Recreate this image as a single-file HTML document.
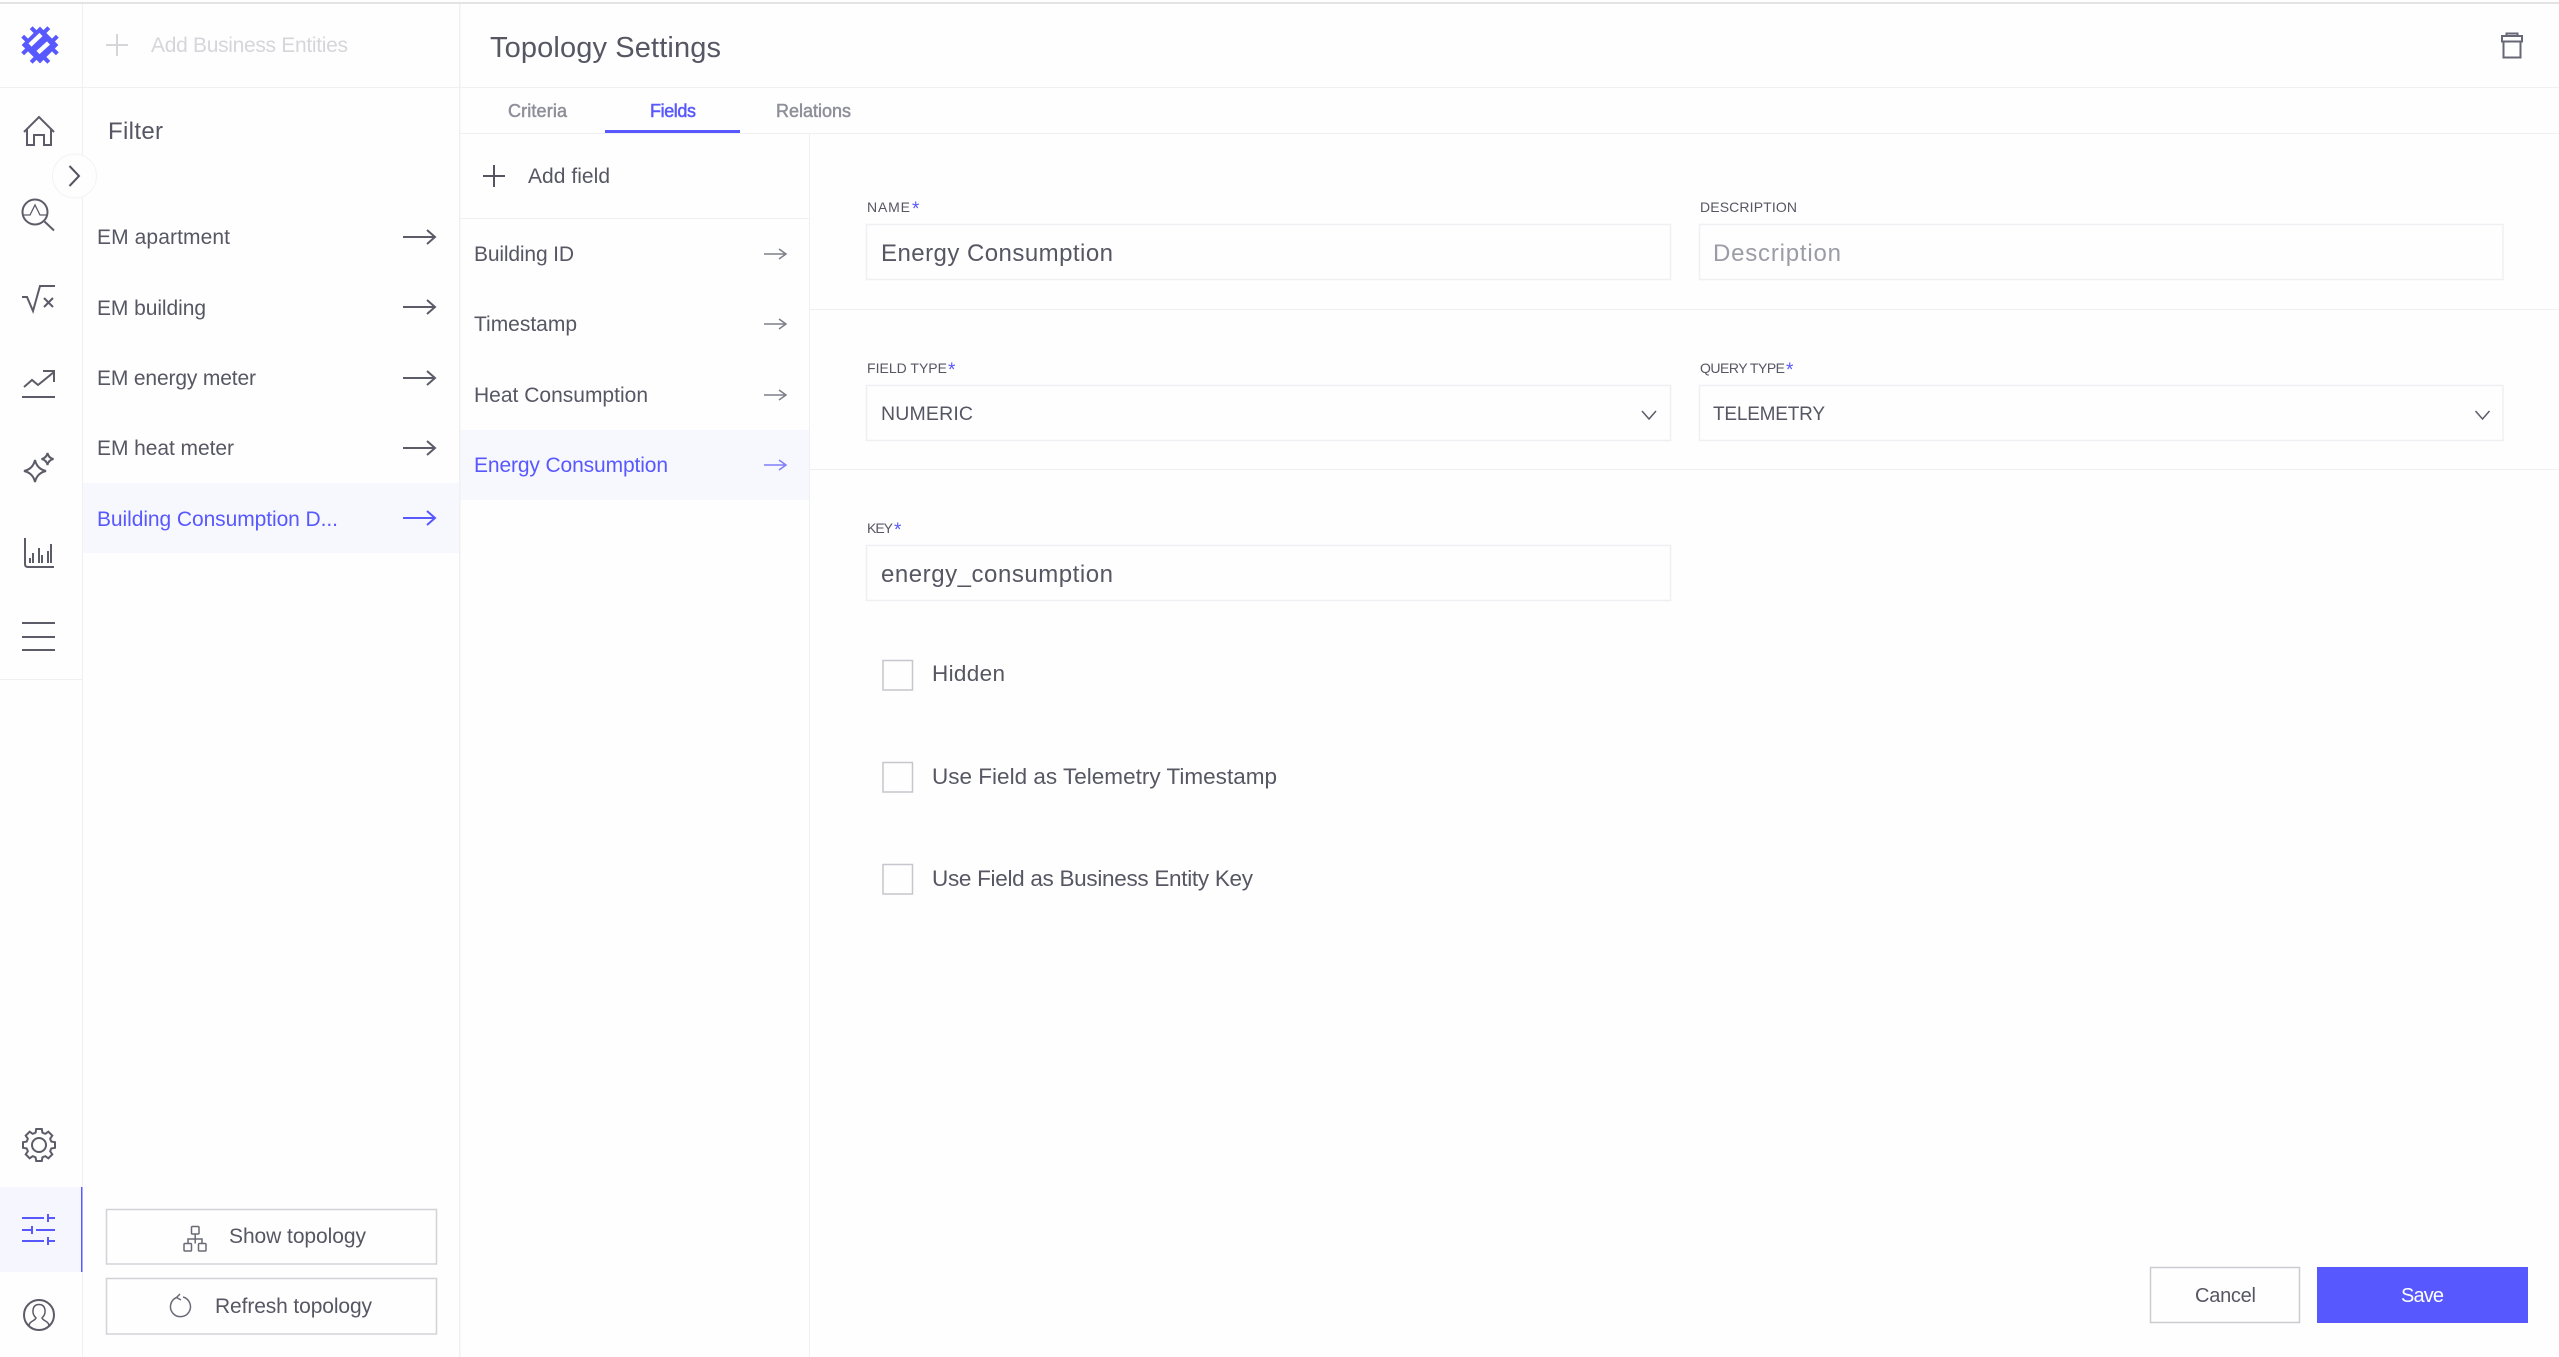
<!DOCTYPE html>
<html lang="en">
<head>
<meta charset="utf-8">
<title>Topology Settings</title>
<style>
html,body{margin:0;padding:0;background:#fefefe;width:2559px;height:1357px;overflow:hidden}
svg{display:block}
text{font-family:"Liberation Sans",Arial,sans-serif;fill:#575764;font-size:21px}
.ic{fill:none;stroke:#5c5c69;stroke-width:2}
.lb{font-size:14px}
.st{font-size:19px;fill:#5858ff}
.b{fill:#5858ff}
</style>
</head>
<body>
<svg xmlns="http://www.w3.org/2000/svg" width="2559" height="1357" viewBox="0 0 2559 1357">
<defs>
<path id="tooth" d="M-4.9-11.6-3.4-12.4-2.8-16H2.8L3.4-12.4 4.9-11.6"/>
<path id="arr" d="M403 0H435M427-7 435 0 427 7"/>
<path id="arr2" d="M764 0H786M779-5 786 0 779 5"/>
</defs>

<rect width="2559" height="1357" fill="#fefefe"/>
<rect y="2" width="2559" height="2" fill="#e3e3e3"/>

<!-- highlights -->
<rect x="83" y="483" width="376" height="70" fill="#f7f7fe"/>
<rect x="460" y="430" width="349" height="70" fill="#f7f7fe"/>
<rect y="1187" width="82" height="85" fill="#f6f6fe"/>
<rect x="81" y="1187" width="1.5" height="85" fill="#5858ff"/>

<!-- grid lines -->
<g fill="#f0f0f3">
<rect x="82" y="4" width="1" height="1183"/><rect x="82" y="1272" width="1" height="85"/>
<rect x="459" y="4" width="1.5" height="1353"/>
<rect y="87" width="2559" height="1"/>
<rect x="460" y="133" width="2099" height="1"/>
<rect x="809" y="134" width="1" height="1223"/>
<rect x="460" y="218" width="349" height="1"/>
<rect x="810" y="309" width="1749" height="1"/>
<rect x="810" y="469" width="1749" height="1"/>
<rect y="679" width="82" height="1"/>
</g>

<!-- logo -->
<g transform="translate(40 45) rotate(45)" fill="#5858ff">
<rect x="-13" y="-13" width="26" height="26"/>
<rect x="-18.500" y="-8" width="37" height="4"/><rect x="-18.500" y="4" width="37" height="4"/>
<rect x="-8" y="-18.500" width="4" height="37"/><rect x="4" y="-18.500" width="4" height="37"/>
</g>
<path d="M30 45 41 34.500M38 52.500 48.500 43" stroke="#fefefe" stroke-width="4.500" fill="none"/>

<!-- rail icons -->
<g class="ic">
<path d="M24 132 39 117 54 132M27 129V145H34V135H44V145H51V129"/>
<circle cx="35" cy="212" r="12.500"/><path d="M44.500 221.500 54 230.500"/>
<path d="M23 215H30L35 205 40 215H47" stroke-width="1.300"/>
<path d="M22 297H27L33 311 40 286H55M44 298 53 307M53 298 44 307"/>
<path d="M24 387 32 380 38 385 54 372M43 371H54V382M22 397H55"/>
<path d="M35 460Q37 469 46 471 37 473 35 482 33 473 24 471 33 469 35 460Z"/>
<path d="M47.500 453Q48.500 458 53.500 459 48.500 460 47.500 465 46.500 460 41.500 459 46.500 458 47.500 453Z"/>
<path d="M25 538V564Q25 567 28 567H54"/>
<path d="M22 623H55M22 637H55M22 650H55"/>
<circle cx="39" cy="1145" r="7"/>
<g transform="translate(39 1145)">
<use href="#tooth"/><use href="#tooth" transform="rotate(45)"/><use href="#tooth" transform="rotate(90)"/><use href="#tooth" transform="rotate(135)"/><use href="#tooth" transform="rotate(180)"/><use href="#tooth" transform="rotate(225)"/><use href="#tooth" transform="rotate(270)"/><use href="#tooth" transform="rotate(315)"/>
</g>
<circle cx="39" cy="1315" r="15"/>
<path d="M29 1326C29 1321 35 1321 36 1318 34 1316 32.500 1313 33 1310 33.500 1306 36 1304.500 39 1304.500S44.500 1306 45 1310C45.500 1313 44 1316 42 1318 43 1321 49 1321 49 1326" stroke-width="1.500"/>
</g>
<g fill="#5c5c69">
<rect x="29" y="558" width="2" height="5"/><rect x="32" y="553" width="2" height="10"/><rect x="38" y="548" width="2" height="15"/><rect x="41" y="555" width="2" height="8"/><rect x="47" y="551" width="2" height="12"/><rect x="50" y="544" width="2" height="19"/>
</g>
<path d="M22 1218H44M48 1214V1222M48 1218H55M22 1230H31M32 1226V1234M36 1230H55M22 1241H44M48 1237V1245M48 1241H55" fill="none" stroke="#5858ff" stroke-width="2"/>

<!-- toggle -->
<circle cx="74.500" cy="176" r="22" fill="#fefefe" stroke="#f3f3f5"/>
<path d="M69.500 166 79 176 69.500 186" fill="none" stroke="#555562" stroke-width="2"/>

<!-- left panel -->
<path d="M117 34V56M106 45H128" stroke="#d6d5da" stroke-width="2" fill="none"/>
<text x="151" y="52" textLength="197" style="fill:#d6d5da">Add Business Entities</text>
<text x="108" y="139" textLength="55" style="font-size:24px">Filter</text>
<text x="97" y="244" textLength="133">EM apartment</text>
<text x="97" y="315" textLength="109">EM building</text>
<text x="97" y="385" textLength="159">EM energy meter</text>
<text x="97" y="455" textLength="137">EM heat meter</text>
<text x="97" y="526" textLength="241" class="b">Building Consumption D...</text>
<g fill="none" stroke-width="2">
<use href="#arr" y="237" stroke="#5c5c69"/><use href="#arr" y="307" stroke="#5c5c69"/><use href="#arr" y="378" stroke="#5c5c69"/><use href="#arr" y="448" stroke="#5c5c69"/><use href="#arr" y="518" stroke="#5858ff"/>
</g>

<!-- left buttons -->
<rect x="106.500" y="1209.500" width="330" height="54.500" fill="#fefefe" stroke="#d2d2d8" stroke-width="1.500"/>
<rect x="106.500" y="1278.500" width="330" height="55.500" fill="#fefefe" stroke="#d2d2d8" stroke-width="1.500"/>
<text x="229" y="1243" textLength="137">Show topology</text>
<text x="215" y="1313" textLength="157">Refresh topology</text>
<g fill="none" stroke="#6a6a76" stroke-width="1.500">
<rect x="191.500" y="1226.500" width="7.500" height="7.500" rx="1"/>
<rect x="184" y="1243.500" width="7.500" height="7.500" rx="1"/>
<rect x="198.500" y="1243.500" width="7.500" height="7.500" rx="1"/>
<path d="M195.200 1234V1243.500M188 1243.500V1239H202V1243.500"/>
<path d="M176.500 1297.500A10 10 0 1 0 183 1297M180 1294 176.500 1297.500 181 1300"/>
</g>

<!-- header -->
<text x="490" y="57" textLength="231" style="font-size:29px">Topology Settings</text>
<g fill="none" stroke="#676775" stroke-width="2">
<path d="M2503.500 42V57.500H2520.500V42M2502 36H2522V41.500H2502ZM2506.500 36V33.500H2517.500V36"/>
</g>

<!-- tabs -->
<text x="508" y="117" textLength="59" style="font-size:18px;fill:#8f8f9a;stroke:#8f8f9a;stroke-width:.5">Criteria</text>
<text x="650" y="117" textLength="46" style="font-size:18px;fill:#5858ff;stroke:#5858ff;stroke-width:.5">Fields</text>
<text x="776" y="117" textLength="75" style="font-size:18px;fill:#8f8f9a;stroke:#8f8f9a;stroke-width:.5">Relations</text>
<rect x="605" y="130" width="135" height="3" fill="#5858ff"/>

<!-- field list -->
<path d="M494 165V187M483 176H505" stroke="#555562" stroke-width="2" fill="none"/>
<text x="528" y="183" textLength="82">Add field</text>
<text x="474" y="261" textLength="100">Building ID</text>
<text x="474" y="331" textLength="103">Timestamp</text>
<text x="474" y="402" textLength="174">Heat Consumption</text>
<text x="474" y="472" textLength="194" class="b">Energy Consumption</text>
<g fill="none" stroke-width="1.500">
<use href="#arr2" y="254" stroke="#7f7f8a"/><use href="#arr2" y="324" stroke="#7f7f8a"/><use href="#arr2" y="395" stroke="#7f7f8a"/><use href="#arr2" y="465" stroke="#7f7ffb"/>
</g>

<!-- form: labels -->
<text x="867" y="212" textLength="43" class="lb">NAME</text><text x="912" y="215" class="st">*</text>
<text x="1700" y="212" textLength="97" class="lb">DESCRIPTION</text>
<text x="867" y="373" textLength="80" class="lb">FIELD TYPE</text><text x="948" y="376" class="st">*</text>
<text x="1700" y="373" textLength="85" class="lb">QUERY TYPE</text><text x="1786" y="376" class="st">*</text>
<text x="867" y="533" textLength="26" class="lb">KEY</text><text x="894" y="536" class="st">*</text>

<!-- form: inputs -->
<g fill="#fefefe" stroke="#f0f0f3" stroke-width="1.500">
<rect x="866.500" y="224.500" width="804" height="55"/>
<rect x="1699.500" y="224.500" width="803.500" height="55"/>
<rect x="866.500" y="385.500" width="804" height="55"/>
<rect x="1699.500" y="385.500" width="803.500" height="55"/>
<rect x="866.500" y="545.500" width="804" height="55"/>
</g>
<text x="881" y="261" textLength="232" style="font-size:24px">Energy Consumption</text>
<text x="1713" y="261" textLength="128" style="font-size:24px;fill:#9c9ca6">Description</text>
<text x="881" y="420" textLength="92" style="font-size:19.500px">NUMERIC</text>
<text x="1713" y="420" textLength="112" style="font-size:19px">TELEMETRY</text>
<text x="881" y="582" textLength="232" style="font-size:24px">energy_consumption</text>
<path d="M1642 411 1649 419 1656 411M2475.500 411 2482.500 419 2489.500 411" fill="none" stroke="#5c5c69" stroke-width="1.500"/>

<!-- checkboxes -->
<g fill="#fefefe" stroke="#c6c6cc" stroke-width="1.500">
<rect x="883" y="660.500" width="29.500" height="29.500"/>
<rect x="883" y="762.500" width="29.500" height="29.500"/>
<rect x="883" y="864.500" width="29.500" height="29.500"/>
</g>
<text x="932" y="681" textLength="73" style="font-size:22.500px">Hidden</text>
<text x="932" y="784" textLength="345" style="font-size:22.500px">Use Field as Telemetry Timestamp</text>
<text x="932" y="886" textLength="321" style="font-size:22.500px">Use Field as Business Entity Key</text>

<!-- actions -->
<rect x="2150.500" y="1267.500" width="149" height="55" fill="#fefefe" stroke="#cbcbd1" stroke-width="1.500"/>
<text x="2195" y="1302" textLength="61" style="font-size:20px">Cancel</text>
<rect x="2317" y="1267" width="211" height="56" fill="#5858ff"/>
<text x="2401" y="1302" textLength="43" style="fill:#fff;font-size:20px">Save</text>
</svg>
</body>
</html>
